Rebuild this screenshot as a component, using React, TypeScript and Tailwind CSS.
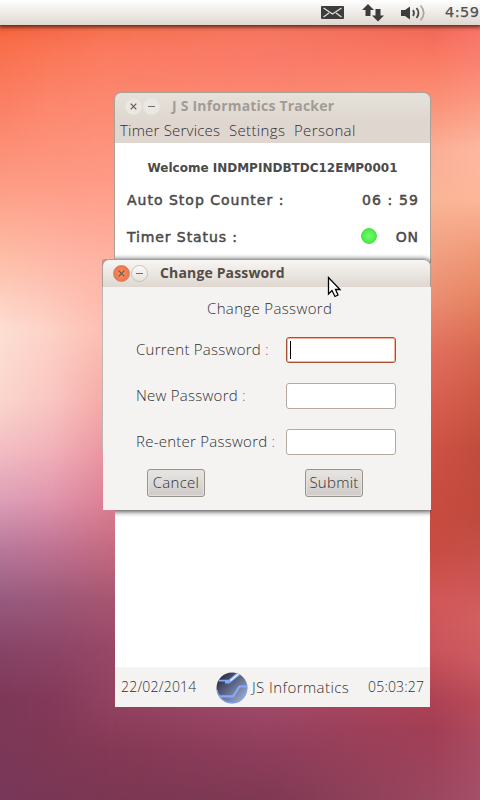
import React from "react";

const ui = "font-['Open_Sans','Noto_Sans',sans-serif] font-light text-[#303030]";
const bold = "font-['DejaVu_Sans',sans-serif] font-bold text-[#4a4a4a]";
const wide = "font-['DejaVu_Sans',sans-serif] text-[14px] leading-4 text-[#4a4a4a] [-webkit-text-stroke:0.5px_#4a4a4a]";

function Wallpaper() {
  return (
    <div className="absolute inset-0" aria-hidden="true">
      <div className="absolute inset-0 bg-[linear-gradient(to_bottom,#ee6038_25px,#f96d48_40px,#fb7e63_100px,#fd9a82_180px,#fdbfa8_260px,#fddfd4_330px,#fbd6cd_400px,#f3bec4_450px,#dda0b8_500px,#b8789b_550px,#965b7f_600px,#874467_650px,#7e3857_700px,#79375a_800px)]" />
      <div className="absolute inset-0 bg-[linear-gradient(to_bottom,#f3684a_25px,#fa7656_50px,#fc866c_100px,#fe9a84_180px,#feb8a8_260px,#fdd0c5_330px,#f9c4c0_400px,#f1b0b8_450px,#e094ac_500px,#bf7291_550px,#9d5879_600px,#8d4566_650px,#84395a_700px,#7f3854_750px,#7a3756_800px)] [mask-image:linear-gradient(to_right,transparent_0px,black_55px)]" />
      <div className="absolute inset-0 bg-[linear-gradient(to_bottom,#f4704d_25px,#fb7a5f_50px,#fc8870_100px,#ff9a86_180px,#ffb2a2_260px,#fdbcb0_330px,#f5a8a4_400px,#ea939f_450px,#dc8093_500px,#c46a80_550px,#a75570_600px,#984766_650px,#924260_700px,#853955_750px,#7b3752_800px)] [mask-image:linear-gradient(to_right,transparent_55px,black_110px)]" />
      <div className="absolute inset-0 bg-[linear-gradient(to_bottom,#f57660_30px,#fa7b6a_60px,#fa8670_90px,#a04868_707px,#8f3e5c_750px,#7f3953_800px)] [mask-image:linear-gradient(to_right,transparent_115px,black_270px)]" />
      <div className="absolute inset-0 bg-[linear-gradient(to_bottom,#f26a5a_30px,#fa7b62_60px,#fb8f76_100px,#fcae96_150px,#fab596_200px,#f3a184_250px,#ec8d72_300px,#e2705f_350px,#da6052_400px,#cf5245_450px,#c94c40_500px,#c94c42_550px,#d2575a_600px,#ca545c_650px,#ae4253_700px,#a23e55_730px,#9a4760_800px)] [mask-image:linear-gradient(to_right,transparent_270px,black_432px)]" />
      <div className="absolute inset-0 bg-[linear-gradient(to_bottom,#f87468_30px,#f98070_60px,#fb9880_100px,#fcb8a0_150px,#fcb698_200px,#f09a78_250px,#e58460_300px,#d66850_350px,#cc5844_400px,#c04c3c_450px,#bf4a3e_520px,#c95350_570px,#d2605f_620px,#cc5a60_660px,#b84a58_700px,#a84b62_750px,#a5506a_800px)] [mask-image:linear-gradient(to_right,transparent_432px,black_480px)]" />
    </div>
  );
}

function TopPanel() {
  return (
    <header className="relative flex h-[25px] items-center justify-end bg-linear-to-b from-white to-[#dfd8d0] shadow-[0_1px_4px_1px_rgba(50,15,5,0.8)]">
      <svg width="23" height="13" viewBox="0 0 23 13" className="mr-[18px]">
        <rect width="23" height="13" rx="1" fill="#3c3c3c" />
        <path d="M2.5 2 11.5 8 20.5 2M2.5 11 8 7M20.5 11 15 7" fill="none" stroke="#e5e1dc" strokeWidth="1.2" />
      </svg>
      <svg width="22" height="18" viewBox="0 0 22 18" className="mr-[17px]">
        <path d="M6 0 12 6H8.5V12H3.5V6H0Z" fill="#3c3c3c" />
        <path d="M16 17.5 10 11.5H13.5V5H18.5V11.5H22Z" fill="#3c3c3c" />
      </svg>
      <svg width="25" height="18" viewBox="0 0 25 18" className="mr-[19px]">
        <path d="M0 6H4L9 2.5V15.5L4 12H0Z" fill="#3c3c3c" />
        <path d="M12 6Q14 9 12 12M15.5 4Q19.5 9 15.5 14" fill="none" stroke="#4b4b4b" strokeWidth="1.8" />
        <path d="M19.5 1.5Q26 9 19.5 16.5" fill="none" stroke="#aaa6a2" strokeWidth="1.7" />
      </svg>
      <span className="w-[35px] whitespace-nowrap font-['DejaVu_Sans',sans-serif] text-[14.5px] leading-none tracking-[0.5px] text-[#505050] [-webkit-text-stroke:0.25px_#505050]">4:59</span>
    </header>
  );
}

function WindowButtons({ active }: { active: boolean }) {
  const close = active
    ? "border-[#c48972] bg-radial from-[#ff9060] to-[#e96a3e]"
    : "border-[#e9e5e1] bg-[#ebe8e4]";
  const minimise = active ? "border-[#c9c3bc] bg-linear-to-b from-[#fbfaf9] to-[#e6e2dd]" : "border-[#e9e5e1] bg-[#ebe8e4]";
  return (
    <div className="flex gap-px">
      <span className={`flex size-[17px] items-center justify-center rounded-full border ${close}`}>
        <svg width="7" height="7" viewBox="0 0 7 7"><path d="M.7.7 6.3 6.3M6.3.7.7 6.3" stroke="#655a52" strokeWidth="1.2" /></svg>
      </span>
      <span className={`flex size-[17px] items-center justify-center rounded-full border ${minimise}`}>
        <span className="h-px w-[7px] bg-[#756e68]" />
      </span>
    </div>
  );
}

function Logo() {
  return (
    <svg width="32" height="32" viewBox="0 0 32 32" className="mt-[2px]">
      <defs>
        <linearGradient id="globe" x1="0" y1="0" x2="1" y2="1">
          <stop offset=".1" stopColor="#24283b" />
          <stop offset=".5" stopColor="#656d8e" />
          <stop offset="1" stopColor="#b2bfe5" />
        </linearGradient>
        <clipPath id="disc"><circle cx="16" cy="16" r="15.5" /></clipPath>
      </defs>
      <g clipPath="url(#disc)">
        <rect width="32" height="32" fill="url(#globe)" />
        <path d="M1 18Q4 31 17 31Q28 31 31 16" fill="none" stroke="#79a7fa" strokeWidth="1.2" />
        <path d="M3 8.7H13L22 1M9 10.5H13L15 9 24 2" fill="none" stroke="#7eabf8" strokeWidth="1.8" />
        <path d="M14.5 8.5 22.5 1.7" stroke="#edf2fb" strokeWidth="1.5" />
        <path d="M1 24.3H17L23.5 14.5H32" fill="none" stroke="#80acfa" strokeWidth="2.2" />
      </g>
    </svg>
  );
}

function TrackerWindow() {
  return (
    <section className="absolute left-[114px] top-[92px] flex h-[615px] w-[317px] flex-col">
      <div className="h-[51px] shrink-0 rounded-t-[7px] border-x border-t border-[#aaa094] bg-linear-to-b from-[#e5e2da] to-[#dfd6cf] to-60%">
        <div className="flex h-[27px] items-center pl-[10px]">
          <WindowButtons active={false} />
          <h1 className="-mt-[2px] ml-[12px] whitespace-nowrap font-['Open_Sans',sans-serif] text-[14px] font-bold leading-none tracking-[0.2px] text-[#a29b95]">J S Informatics Tracker</h1>
        </div>
        <nav className={`flex h-[21px] items-center whitespace-nowrap pl-[5px] text-[15px] leading-none tracking-[0.2px] ${ui}`}>
          <span className="w-[109px]">Timer Services</span>
          <span className="w-[65px] tracking-[0.35px]">Settings</span>
          <span className="tracking-[0.35px]">Personal</span>
        </nav>
      </div>
      <main className="h-[120px] shrink-0 border-x border-[#aaa094] bg-white">
        <p className={`pt-[18px] text-center text-[12px] leading-[14px] ${bold}`}>Welcome INDMPINDBTDC12EMP0001</p>
        <div className={`mt-[17px] flex justify-between pl-[12px] pr-[11px] tracking-[1px] ${wide}`}>
          <span>Auto Stop Counter :</span>
          <span className="tracking-[1.1px]">06 : 59</span>
        </div>
        <div className={`mt-[21px] flex items-center pl-[12px] pr-[11px] tracking-[0.9px] ${wide}`}>
          <span className="grow">Timer Status :</span>
          <span className="-mt-[2px] mr-[19px] size-4 rounded-full border border-[#4fe04b] bg-radial from-[#72fa6c] to-[#2fe52d]" />
          <span>ON</span>
        </div>
      </main>
      <div className="mx-px grow bg-white" />
      <footer className={`mx-px flex h-10 shrink-0 items-center whitespace-nowrap bg-[#f4f3f2] pl-[6px] text-[14px] leading-none tracking-[0.2px] ${ui}`}>
        <span className="w-[95px]">22/02/2014</span>
        <Logo />
        <span className="ml-[4px] w-[116px] text-[15px] tracking-[0.42px]">JS Informatics</span>
        <span>05:03:27</span>
      </footer>
    </section>
  );
}

function Field({ label, focused = false }: { label: string; focused?: boolean }) {
  return (
    <div className="flex h-[26px] items-center">
      <span className="w-[150px] pb-[2px]">{label} <span className="text-[#905090]">:</span></span>
      <span className={`flex h-[26px] w-[110px] items-center rounded-[3px] border bg-white pl-[3px] ${focused ? "border-[#a65335] shadow-[inset_0_0_0_1px_#f7b298]" : "border-[#b5aaa0]"}`}>
        {focused && <span className="h-[18px] w-px bg-black" />}
      </span>
    </div>
  );
}

function DialogButton({ children }: { children: React.ReactNode }) {
  return (
    <button className="h-7 w-[58px] rounded-[3px] border border-[#98938c] bg-linear-to-b from-[#e8e6e4] to-[#cfcac7] pb-[2px] leading-none tracking-[0.25px] shadow-[inset_0_0_0_1px_#e5e1de]">{children}</button>
  );
}

function PasswordDialog() {
  return (
    <section className={`absolute left-[103px] top-[259px] h-[251px] w-[328px] whitespace-nowrap rounded-t-[7px] bg-[#f4f3f2] text-[15px] leading-none tracking-[0.25px] shadow-[0_1px_5px_1px_rgba(0,0,0,0.65)] [clip-path:polygon(12px_-8px,100%_-8px,100%_calc(100%+8px),12px_calc(100%+8px),12px_100%,0px_100%,0px_193px,-1px_193px,-1px_0px,12px_0px)] ${ui}`}>
      <div className="-ml-px flex h-7 items-center rounded-t-[7px] border-x border-t border-[#aa9e92] bg-linear-to-b from-[#f7f6f4] to-[#dfd7d0] pl-[10px]">
        <WindowButtons active />
        <h2 className="-mt-px ml-[12px] font-['Open_Sans',sans-serif] text-[14px] font-bold leading-none tracking-[0.15px] text-[#554c46]">Change Password</h2>
      </div>
      <div className="-ml-px h-[165px] border-l border-[#bdb6b0]">
        <p className="h-[50px] pl-[104px] pt-[14px] tracking-[0.35px]">Change Password</p>
        <form className="flex flex-col gap-5 pl-[33px]">
          <Field label="Current Password" focused />
          <Field label="New Password" />
          <Field label="Re-enter Password" />
        </form>
        <div className="flex gap-[100px] pl-[44px] pt-[14px]">
          <DialogButton>Cancel</DialogButton>
          <DialogButton>Submit</DialogButton>
        </div>
      </div>
    </section>
  );
}

export default function App() {
  return (
    <div className="relative h-[800px] w-[480px] overflow-hidden">
      <Wallpaper />
      <TopPanel />
      <TrackerWindow />
      <PasswordDialog />
      <svg className="absolute left-[327px] top-[276px]" width="15" height="22" viewBox="0 0 15 22">
        <path d="M1.5 1.5V18L5 14.5L8 20.5L11 19L8.5 13.5H13Z" fill="white" stroke="black" strokeWidth="1.3" />
      </svg>
    </div>
  );
}
